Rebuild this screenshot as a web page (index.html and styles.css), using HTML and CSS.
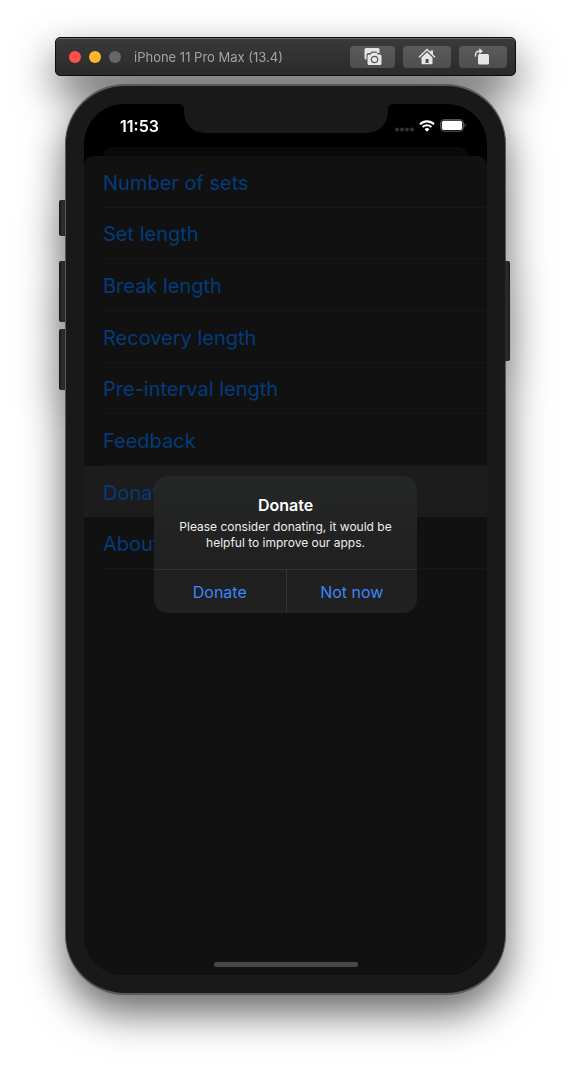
FILE: index.html
```html
<!DOCTYPE html>
<html lang="en">
<head>
<meta charset="utf-8">
<meta name="viewport" content="width=device-width, initial-scale=1">
<title>iPhone 11 Pro Max (13.4)</title>
<link rel="stylesheet" href="styles.css">
</head>
<body>
<div class="simulator">
  <header class="toolbar">
    <div class="lights">
      <button class="light light-close" aria-label="Close"></button>
      <button class="light light-minimize" aria-label="Minimize"></button>
      <button class="light light-zoom" aria-label="Zoom" disabled></button>
    </div>
    <h1 class="title">iPhone 11 Pro Max (13.4)</h1>
    <div class="tools">
      <button class="tool" aria-label="Screenshot">
        <svg width="18" height="18" viewBox="0 0 18 18">
          <path d="M2 0h12a1.500 1.500 0 0 1 1.500 1.500V5h-2l-1.200-1.500H7.500L6.300 5H4.500a2 2 0 0 0-2 2v4.500H2A1.500 1.500 0 0 1 .5 10V1.500A1.500 1.500 0 0 1 2 0z" fill="#e6e6e6"/>
          <path d="M5 6.500h1.700L8 4.800h4.500l1.300 1.700h2.200A1.500 1.500 0 0 1 17.500 8v7.500A1.500 1.500 0 0 1 16 17H5a1.500 1.500 0 0 1-1.500-1.500V8A1.500 1.500 0 0 1 5 6.500z" fill="#e6e6e6"/>
          <circle cx="10.500" cy="11.500" r="3.200" fill="none" stroke="#555" stroke-width="1.200"/>
        </svg>
      </button>
      <button class="tool" aria-label="Home">
        <svg width="18" height="18" viewBox="0 0 18 18">
          <path d="M1 9.200 9 1.500l8 7.700" fill="none" stroke="#e6e6e6" stroke-width="1.400"/>
          <path d="M12.500 2.500H15v4.500l-2.500-2.300z" fill="#e6e6e6"/>
          <path d="M9 4.200 14.500 9.500v5.700a1 1 0 0 1-1 1h-9a1 1 0 0 1-1-1V9.500z" fill="#e6e6e6"/>
          <path d="M7.600 11h2.900v4H7.600z" fill="#4a4a4a"/>
        </svg>
      </button>
      <button class="tool" aria-label="Rotate">
        <svg width="18" height="18" viewBox="0 0 18 18">
          <rect x="4" y="6" width="11" height="10.500" rx="1.500" fill="#e6e6e6"/>
          <path d="M1.500 8.500V7C1.500 4.700 3 3.300 5 3.300h1" fill="none" stroke="#e6e6e6" stroke-width="1.400"/>
          <path d="M5.300.3 9 3.300 5.300 6z" fill="#e6e6e6"/>
        </svg>
      </button>
    </div>
  </header>

  <div class="phone">
    <span class="key key-mute"></span>
    <span class="key key-up"></span>
    <span class="key key-down"></span>
    <span class="key key-side"></span>
    <div class="bezel">
    <div class="screen">
      <svg class="notch" width="216" height="30" viewBox="0 0 216 30">
        <path d="M0 0h216c-4 0-6 2-6 6 0 14-8 23-23 23H29C14 29 6 20 6 6 6 2 4 0 0 0z" fill="#191919"/>
      </svg>
      <div class="status">
        <time class="clock">11:53</time>
        <div class="indicators">
          <svg width="20" height="5" viewBox="0 0 20 5" fill="#343434">
            <circle cx="3" cy="2.500" r="2"/><circle cx="8" cy="2.500" r="2"/><circle cx="13" cy="2.500" r="2"/><circle cx="18" cy="2.500" r="2"/>
          </svg>
          <svg class="wifi" width="16" height="12" viewBox="0 0 16 12">
            <path d="M1 4.200a10 10 0 0 1 14 0M3.600 7a6.300 6.300 0 0 1 8.800 0" fill="none" stroke="#fff" stroke-width="2.100"/>
            <path d="M5.600 9.200a3.500 3.500 0 0 1 4.800 0L8 11.700z" fill="#fff"/>
          </svg>
          <svg width="26" height="13" viewBox="0 0 26 13">
            <rect x=".6" y=".6" width="22.800" height="11.600" rx="3.300" fill="none" stroke="#5c5c5c"/>
            <rect x="1.800" y="1.800" width="20.400" height="9.200" rx="2" fill="#fff"/>
            <path d="M24.500 4.300c1.600.7 1.600 3.300 0 4z" fill="#5c5c5c"/>
          </svg>
        </div>
      </div>
      <div class="back-card"></div>
      <main class="sheet">
        <nav class="menu">
          <a class="row" href="#sets">Number of sets</a>
          <a class="row" href="#set-length">Set length</a>
          <a class="row" href="#break">Break length</a>
          <a class="row" href="#recovery">Recovery length</a>
          <a class="row" href="#pre-interval">Pre-interval length</a>
          <a class="row" href="#feedback">Feedback</a>
          <a class="row selected" href="#donate">Donate</a>
          <a class="row" href="#about">About</a>
        </nav>
        <div class="home-bar"></div>
      </main>
      <div class="overlay">
        <section class="alert" role="alertdialog" aria-labelledby="alert-title" aria-describedby="alert-text">
          <div class="alert-body">
            <h2 class="alert-title" id="alert-title">Donate</h2>
            <p class="alert-text" id="alert-text">Please consider donating, it would be helpful to improve our apps.</p>
          </div>
          <div class="actions">
            <button class="action">Donate</button>
            <button class="action">Not now</button>
          </div>
        </section>
      </div>
    </div>
    </div>
  </div>
</div>
</body>
</html>
```
FILE: styles.css
```css
* {
  box-sizing: border-box;
}

body {
  margin: 0;
  background: #fff;
  font-family: Inter, "Liberation Sans", sans-serif;
}

button {
  padding: 0;
  border: 0;
  font: inherit;
}

.simulator {
  display: flex;
  flex-direction: column;
  gap: 8px;
  min-height: 100vh;
  padding: 37px 55px 74px;
  filter: drop-shadow(0 18px 20px rgba(0, 0, 0, 0.6));
}

.toolbar {
  display: flex;
  align-items: center;
  height: 39px;
  padding: 0 8px 0 13px;
  border: 1px solid #0c0c0c;
  border-radius: 5px;
  background: linear-gradient(#3a3a3a, #2a2a2a);
  box-shadow: inset 0 1px #666;
}

.lights {
  display: flex;
  gap: 8px;
}

.light {
  width: 12px;
  height: 12px;
  border-radius: 50%;
}

.light-close {
  background: #ff4f49;
}

.light-minimize {
  background: #fdb52b;
}

.light-zoom {
  background: #666;
}

.title {
  flex: 1;
  margin: 0 0 0 13px;
  color: #a3a3a3;
  font-size: 13px;
  font-weight: 400;
  white-space: nowrap;
}

.tools {
  display: flex;
  gap: 8px;
}

.tool {
  display: flex;
  align-items: center;
  justify-content: center;
  width: 48px;
  height: 22px;
  border-radius: 4px;
  background: linear-gradient(#5b5b5b, #4e4e4e);
}

.tool:first-child {
  width: 45px;
}

.phone {
  position: relative;
  display: flex;
  flex: 1;
  margin: 0 10px;
}

.bezel {
  position: relative;
  display: flex;
  flex: 1;
  padding: 18px;
  border: 1px solid #5a5a5a;
  border-width: 2px 1px;
  border-radius: 60px;
  background: #191919;
}

.key {
  position: absolute;
  left: -6px;
  width: 9px;
  height: 61px;
  border-radius: 2px;
  background: linear-gradient(90deg, #161616, #2e2e2e 40%, #1c1c1c);
}

.key-mute {
  top: 116px;
  height: 36px;
}

.key-up {
  top: 177px;
}

.key-down {
  top: 245px;
}

.key-side {
  z-index: 1;
  top: 177px;
  right: -4px;
  left: auto;
  width: 6px;
  height: 100px;
}

.screen {
  position: relative;
  display: flex;
  flex: 1;
  flex-direction: column;
  overflow: hidden;
  border-radius: 40px;
  background: #000;
}

.notch {
  position: absolute;
  top: 0;
  left: 50%;
  transform: translateX(-50%);
}

.status {
  display: flex;
  align-items: center;
  justify-content: space-between;
  height: 43px;
  padding: 0 21px 0 36px;
}

.clock {
  color: #fff;
  font-size: 16px;
  font-weight: 600;
}

.indicators {
  display: flex;
  align-items: center;
  gap: 5px;
}

.indicators svg:first-child {
  margin-top: 8px;
}

.back-card {
  height: 9px;
  margin: 0 19px;
  border-radius: 9px 9px 0 0;
  background: #0a0a0c;
}

.sheet {
  display: flex;
  flex: 1;
  flex-direction: column;
  justify-content: space-between;
  border-radius: 9px 9px 0 0;
  background: #111;
}

.menu {
  display: grid;
  grid-auto-rows: 1fr;
  height: 413px;
}

.row {
  display: flex;
  align-items: center;
  padding: 2px 0 0 19px;
  background: linear-gradient(#171717, #171717) 20px 100% / 100% 1px no-repeat;
  color: #033b7a;
  font-size: 20px;
  text-decoration: none;
}

.selected {
  background: #1c1c1c;
}

.home-bar {
  align-self: center;
  width: 144px;
  height: 5px;
  margin-bottom: 8px;
  border-radius: 3px;
  background: #484848;
}

.overlay {
  position: absolute;
  inset: 10px 0 0;
  display: flex;
  align-items: center;
  justify-content: center;
}

.alert {
  width: 263px;
  overflow: hidden;
  border-radius: 14px;
  background: linear-gradient(#252626, #202020 70%);
}

.alert-body {
  padding: 18px 12px;
  color: #fff;
  text-align: center;
}

.alert-title {
  margin: 0 0 2px;
  font-size: 16px;
  font-weight: 600;
  line-height: 23px;
}

.alert-text {
  margin: 0;
  color: #eee;
  font-size: 12px;
  line-height: 16px;
}

.actions {
  display: grid;
  grid-template-columns: 1fr 1fr;
  border-top: 1px solid #333;
}

.action {
  height: 43px;
  background: transparent;
  color: #3a86fa;
  font-size: 16px;
}

.action + .action {
  border-left: 1px solid #333;
}
```
